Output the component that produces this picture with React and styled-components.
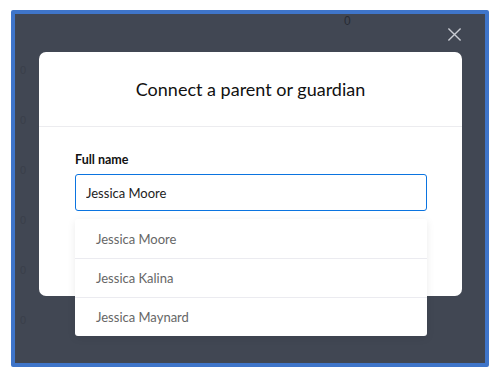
import React from "react";
import styled, { createGlobalStyle } from "styled-components";

const GlobalStyle = createGlobalStyle`
  html, body {
    margin: 0;
    padding: 0;
    background: #ffffff;
    font-family: "Lato", "Noto Sans", sans-serif;
  }
`;

const names = ["Jessica Moore", "Jessica Kalina", "Jessica Maynard"];
const ticks = [0, 1, 2, 3, 4, 5];

function App() {
  return (
    <>
      <GlobalStyle />
      <Page>
        <Frame>
          <Chart>
            <TopTick>0</TopTick>
            <Ticks>
              {ticks.map((t) => (
                <Tick key={t}>0</Tick>
              ))}
            </Ticks>
          </Chart>

          <Overlay>
            <CloseButton aria-label="Close">
              <svg width="15" height="15" viewBox="0 0 16 16">
                <path
                  d="M1.5 1.5 L14.5 14.5 M14.5 1.5 L1.5 14.5"
                  stroke="#c9ccd3"
                  strokeWidth="1.5"
                  fill="none"
                />
              </svg>
            </CloseButton>

            <Modal>
              <Header>
                <Title>Connect a parent or guardian</Title>
              </Header>
              <Body>
                <Label>Full name</Label>
                <Field>
                  <Input value="Jessica Moore" readOnly />
                  <Suggestions>
                    {names.map((n) => (
                      <Suggestion key={n}>{n}</Suggestion>
                    ))}
                  </Suggestions>
                </Field>
              </Body>
            </Modal>
          </Overlay>
        </Frame>
      </Page>
    </>
  );
}

export default App;

const Page = styled.div`
  width: 500px;
  height: 380px;
  padding: 10px 0 0 11px;
  box-sizing: border-box;
`;

const Frame = styled.div`
  width: 478px;
  height: 357px;
  box-sizing: border-box;
  border: 4px solid #3f75c9;
  border-radius: 2px;
  background: #414753;
  display: grid;
  overflow: hidden;
`;

const Chart = styled.div`
  grid-area: 1 / 1;
  display: flex;
  flex-direction: column;
  padding: 0 0 0 5px;
  color: #3a3f4a;
  font-family: "Liberation Sans", sans-serif;
  font-size: 11px;
`;

const TopTick = styled.div`
  padding-left: 324px;
  color: #272b34;
  font-size: 12px;
  line-height: 14px;
`;

const Ticks = styled.div`
  display: flex;
  flex-direction: column;
  gap: 37px;
  margin-top: 36px;
`;

const Tick = styled.div`
  line-height: 13px;
`;

const Overlay = styled.div`
  grid-area: 1 / 1;
  position: relative;
  padding: 38px 23px 0 24px;
`;

const CloseButton = styled.button`
  position: absolute;
  top: 13px;
  right: 23px;
  width: 15px;
  height: 15px;
  padding: 0;
  border: none;
  background: none;
  display: flex;
`;

const Modal = styled.div`
  height: 244px;
  background: #ffffff;
  border-radius: 7px;
`;

const Header = styled.div`
  height: 74px;
  border-bottom: 1px solid #ececef;
  display: flex;
  align-items: center;
  justify-content: center;
`;

const Title = styled.h2`
  margin: 0;
  font-size: 18px;
  font-weight: 400;
  color: #111111;
`;

const Body = styled.div`
  padding: 25px 35px 0 36px;
`;

const Label = styled.div`
  font-size: 12.5px;
  font-weight: 700;
  color: #111111;
  line-height: 16px;
  margin-bottom: 6px;
`;

const Field = styled.div`
  position: relative;
`;

const Input = styled.input`
  display: block;
  width: 100%;
  height: 37px;
  box-sizing: border-box;
  border: 1.5px solid #0b74e0;
  border-radius: 3px;
  padding: 0 10px;
  font-family: inherit;
  font-size: 13px;
  color: #222222;
  outline: none;
`;

const Suggestions = styled.div`
  position: absolute;
  top: 45px;
  left: 0;
  right: 0;
  background: #ffffff;
  border-radius: 3px;
  box-shadow: 0 2px 8px rgba(0, 0, 0, 0.08);
`;

const Suggestion = styled.div`
  height: 39px;
  display: flex;
  align-items: center;
  padding-left: 21px;
  font-size: 13px;
  color: #666666;
  border-top: 1px solid #ebebf0;
  box-sizing: border-box;

  &:first-child {
    border-top: none;
  }
`;
